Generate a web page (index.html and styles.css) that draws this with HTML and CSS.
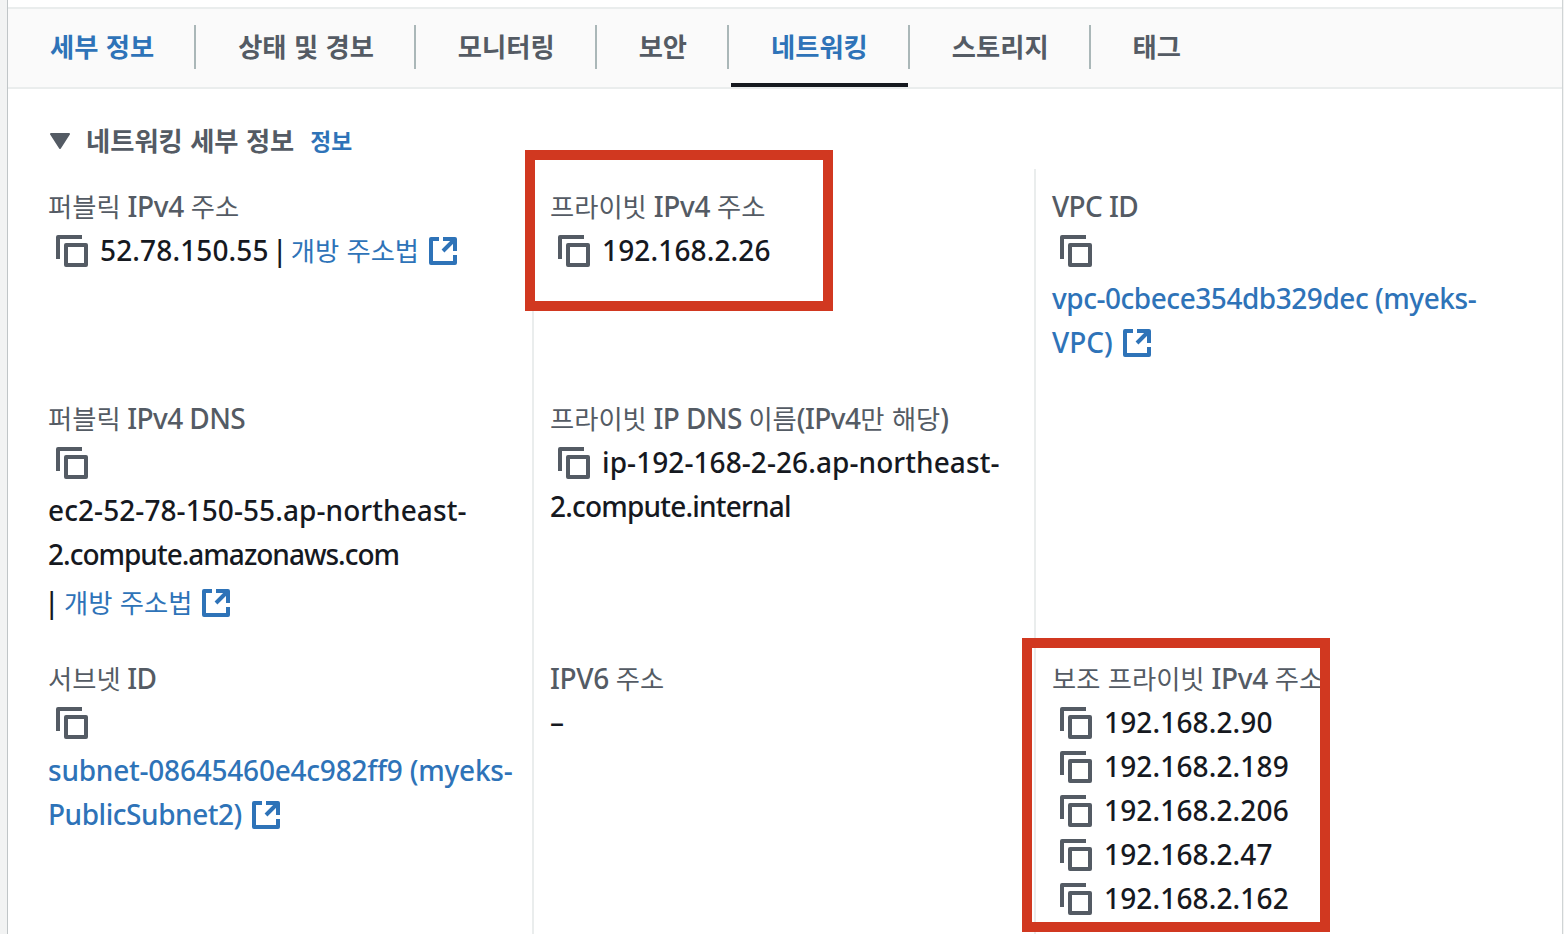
FILE: index.html
```html
<!DOCTYPE html>
<html lang="ko">
<head>
  <meta charset="UTF-8" />
  <meta name="viewport" content="width=device-width, initial-scale=1.0"/>
  <title>네트워킹 세부 정보</title>
  <link rel="stylesheet" href="styles.css">
</head>
<body>

  <!-- shared icons -->
  <svg class="sprite" width="0" height="0">
    <symbol id="copy" viewBox="0 0 32 32">
      <path d="M2 24V2H26" fill="none" stroke="currentColor" stroke-width="4" stroke-linejoin="round"/>
      <rect x="10" y="10" width="20" height="20" fill="none" stroke="currentColor" stroke-width="4" stroke-linejoin="round"/>
    </symbol>
    <symbol id="external" viewBox="0 0 28 28">
      <path d="M10 2H2V26H26V18M14 2H26V14M26 2L14 14" fill="none" stroke="currentColor" stroke-width="4" stroke-linejoin="round"/>
    </symbol>
  </svg>

  <div class="panel">
    <nav class="tabs">
      <a class="tab link">세부 정보</a>
      <a class="tab">상태 및 경보</a>
      <a class="tab">모니터링</a>
      <a class="tab">보안</a>
      <a class="tab link active">네트워킹</a>
      <a class="tab">스토리지</a>
      <a class="tab">태그</a>
    </nav>

    <div class="section-header">
      <svg class="caret" viewBox="0 0 20 16"><path d="M1 1H19L10 15Z" fill="currentColor" stroke="currentColor" stroke-width="2" stroke-linejoin="round"/></svg>
      <h2>네트워킹 세부 정보</h2>
      <a class="info link">정보</a>
    </div>

    <div class="columns">
      <div class="column">
        <div class="field row-1">
          <div class="label"><span class="ko">퍼블릭</span> IPv4 <span class="ko">주소</span></div>
          <div class="value"><svg class="copy"><use href="#copy"/></svg><span class="ip">52.78.150.55</span><span class="divider">|</span><a class="link"><span class="ko">개방 주소법</span><svg class="external"><use href="#external"/></svg></a></div>
        </div>
        <div class="field row-2">
          <div class="label caps"><span class="ko">퍼블릭</span> IPv4 DNS</div>
          <div class="value tall"><svg class="copy"><use href="#copy"/></svg></div>
          <div class="value host">ec2-52-78-150-55.ap-northeast-</div>
          <div class="value domain public">2.compute.amazonaws.com</div>
          <div class="value last"><span class="divider first">|</span><a class="link"><span class="ko">개방 주소법</span><svg class="external"><use href="#external"/></svg></a></div>
        </div>
        <div class="field">
          <div class="label caps"><span class="ko">서브넷</span> ID</div>
          <div class="value tall"><svg class="copy"><use href="#copy"/></svg></div>
          <div class="value"><a class="link subnet">subnet-08645460e4c982ff9 (myeks-</a></div>
          <div class="value"><a class="link resource">PublicSubnet2)<svg class="external"><use href="#external"/></svg></a></div>
        </div>
      </div>

      <div class="column">
        <div class="field row-1">
          <div class="label"><span class="ko">프라이빗</span> IPv4 <span class="ko">주소</span></div>
          <div class="value"><svg class="copy"><use href="#copy"/></svg><span class="ip">192.168.2.26</span></div>
        </div>
        <div class="field row-2">
          <div class="label caps"><span class="ko">프라이빗</span> IP DNS <span class="ko">이름</span>(IPv4<span class="ko">만 해당</span>)</div>
          <div class="value host"><svg class="copy"><use href="#copy"/></svg>ip-192-168-2-26.ap-northeast-</div>
          <div class="value domain">2.compute.internal</div>
        </div>
        <div class="field">
          <div class="label">IPV6 <span class="ko">주소</span></div>
          <div class="value">–</div>
        </div>
      </div>

      <div class="column">
        <div class="field row-1">
          <div class="label caps">VPC ID</div>
          <div class="value tall"><svg class="copy"><use href="#copy"/></svg></div>
          <div class="value"><a class="link resource">vpc-0cbece354db329dec (myeks-</a></div>
          <div class="value"><a class="link">VPC)<svg class="external"><use href="#external"/></svg></a></div>
        </div>
        <div class="field row-2"></div>
        <div class="field">
          <div class="label"><span class="ko">보조 프라이빗</span> IPv4 <span class="ko">주소</span></div>
          <div class="value"><svg class="copy"><use href="#copy"/></svg><span class="ip">192.168.2.90</span></div>
          <div class="value"><svg class="copy"><use href="#copy"/></svg><span class="ip">192.168.2.189</span></div>
          <div class="value"><svg class="copy"><use href="#copy"/></svg><span class="ip">192.168.2.206</span></div>
          <div class="value"><svg class="copy"><use href="#copy"/></svg><span class="ip">192.168.2.47</span></div>
          <div class="value"><svg class="copy"><use href="#copy"/></svg><span class="ip">192.168.2.162</span></div>
        </div>
      </div>
    </div>
  </div>

  <!-- red boxes around the private addresses -->
  <div class="highlight highlight-private"></div>
  <div class="highlight highlight-secondary"></div>

</body>
</html>
```
FILE: styles.css
```css
* {
  box-sizing: border-box;
}
body {
  font-family: "Noto Sans", "Noto Sans CJK KR", sans-serif;
  font-size: 28px;
  font-weight: 470;
  color: #16191f;
  background: #f2f3f3;
  margin: 0;
  padding: 0 1px 0 7px;
  height: 934px;
  overflow: hidden;
}
.sprite {
  position: absolute;
}
.panel {
  height: 934px;
  padding-top: 7px;
  background: #fff;
  border-left: 1px solid #c0c5c7;
  border-right: 1px solid #d0d4d5;
  overflow: hidden;
}
.link {
  color: #2e73b8;
}
.tabs {
  display: flex;
  height: 82px;
  padding-top: 16px;
  background: #fafafa;
  border-top: 2px solid #eaeded;
  border-bottom: 2px solid #eaeded;
}
.tab {
  position: relative;
  height: 44px;
  line-height: 42px;
  padding: 0 40px 0 42px;
  border-right: 2px solid #aab7b8;
  font-family: "Noto Sans CJK KR", sans-serif;
  font-size: 26.3px;
  font-weight: bold;
  white-space: nowrap;
  color: #545b64;
}
.tab:last-child {
  border-right: none;
}
.tab.link {
  color: #2e73b8;
}
.tab.active::after {
  content: "";
  position: absolute;
  left: 2px;
  right: 0;
  top: 58px;
  height: 4px;
  background: #16191f;
}
.section-header {
  display: flex;
  align-items: center;
  height: 80px;
  padding: 24px 0 0 42px;
  font-family: "Noto Sans CJK KR", sans-serif;
  color: #545b64;
}
.caret {
  width: 20px;
  height: 16px;
  margin-right: 16px;
}
h2 {
  margin: 0 16px 3px 0;
  font-size: 26.3px;
  font-weight: bold;
  line-height: 40px;
}
.info {
  font-size: 22.8px;
  font-weight: bold;
  line-height: 40px;
}
.columns {
  display: flex;
  height: 765px;
  padding-left: 40px;
}
.column {
  flex: none;
  width: 502px;
  padding-top: 16px;
}
.column:first-child {
  width: 484px;
}
.column + .column {
  padding-left: 16px;
  border-left: 2px solid #eaeded;
}
.row-1 {
  height: 212px;
}
.row-2 {
  height: 260px;
}
.label, .value {
  display: flex;
  align-items: center;
  height: 44px;
  padding-bottom: 2px;
  white-space: pre;
}
.label {
  color: #545b64;
  letter-spacing: -0.35px;
}
.label.caps {
  letter-spacing: -0.6px;
}
.value.tall {
  height: 48px;
  padding-bottom: 6px;
}
.value.last {
  height: 52px;
}
.ip {
  letter-spacing: 0.14px;
}
.host {
  letter-spacing: 0.08px;
}
.domain {
  letter-spacing: -0.8px;
}
.domain.public {
  letter-spacing: -1px;
}
.subnet {
  letter-spacing: -0.22px;
}
.resource {
  letter-spacing: -0.46px;
}
.ko {
  font-family: "Noto Sans CJK KR", sans-serif;
  font-size: 26.3px;
  font-weight: 400;
  line-height: 40px;
  letter-spacing: 0;
}
.value .link {
  display: flex;
  align-items: center;
}
.divider {
  width: 22px;
  text-align: center;
}
.divider.first {
  width: 16px;
  text-align: left;
  text-indent: -4px;
}
.copy {
  width: 32px;
  height: 32px;
  margin: 2px 12px 0 8px;
  color: #545b64;
}
.external {
  width: 28px;
  height: 28px;
  margin: 2px 0 0 10px;
}
.highlight {
  position: absolute;
  width: 308px;
  border: 10px solid #d13820;
}
.highlight-private {
  left: 525px;
  top: 150px;
  height: 161px;
}
.highlight-secondary {
  left: 1022px;
  top: 638px;
  height: 294px;
}
```
